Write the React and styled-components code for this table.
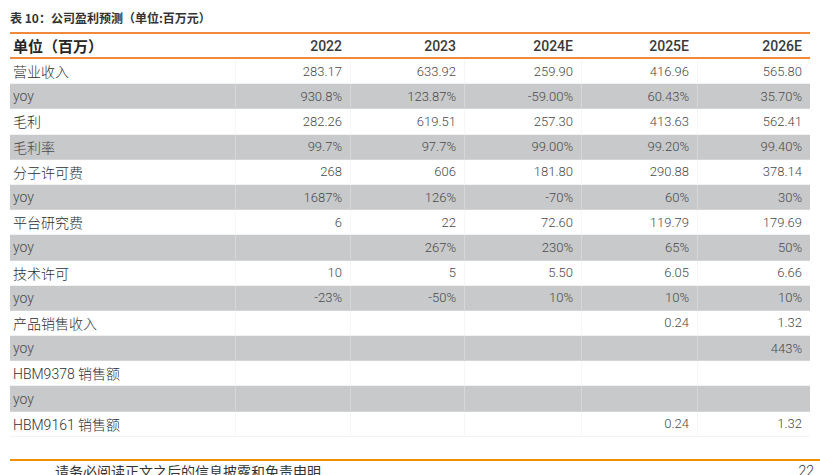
import React from "react";
import styled, { createGlobalStyle } from "styled-components";

const GlobalStyle = createGlobalStyle`
  html, body {
    margin: 0;
    padding: 0;
    background: #ffffff;
    overflow: hidden;
  }
  body {
    font-family: Roboto, "Noto Sans CJK SC", sans-serif;
  }
`;

const COLS = "225px 115px 114px 117px 116px 113px";

const rows = [
  { label: "营业收入", values: ["283.17", "633.92", "259.90", "416.96", "565.80"] },
  { label: "yoy", values: ["930.8%", "123.87%", "-59.00%", "60.43%", "35.70%"] },
  { label: "毛利", values: ["282.26", "619.51", "257.30", "413.63", "562.41"] },
  { label: "毛利率", values: ["99.7%", "97.7%", "99.00%", "99.20%", "99.40%"] },
  { label: "分子许可费", values: ["268", "606", "181.80", "290.88", "378.14"] },
  { label: "yoy", values: ["1687%", "126%", "-70%", "60%", "30%"] },
  { label: "平台研究费", values: ["6", "22", "72.60", "119.79", "179.69"] },
  { label: "yoy", values: ["", "267%", "230%", "65%", "50%"] },
  { label: "技术许可", values: ["10", "5", "5.50", "6.05", "6.66"] },
  { label: "yoy", values: ["-23%", "-50%", "10%", "10%", "10%"] },
  { label: "产品销售收入", values: ["", "", "", "0.24", "1.32"] },
  { label: "yoy", values: ["", "", "", "", "443%"] },
  { label: "HBM9378 销售额", values: ["", "", "", "", ""] },
  { label: "yoy", values: ["", "", "", "", ""] },
  { label: "HBM9161 销售额", values: ["", "", "", "0.24", "1.32"] },
];

const years = ["2022", "2023", "2024E", "2025E", "2026E"];

const Page = styled.div`
  width: 820px;
  height: 475px;
  padding-left: 10px;
  box-sizing: border-box;
  display: flex;
  flex-direction: column;
`;

const Title = styled.div`
  height: 32px;
  display: flex;
  align-items: center;
  padding-top: 3px;
  box-sizing: border-box;
  font-family: "Noto Sans CJK SC", sans-serif;
  font-weight: 700;
  font-size: 12px;
  color: #333333;
`;

const Table = styled.div`
  width: 800px;
  display: flex;
  flex-direction: column;
`;

const HeaderRow = styled.div`
  display: grid;
  grid-template-columns: ${COLS};
  height: 23px;
  border-top: 2px solid #f0893a;
  border-bottom: 2px solid #f0893a;
  align-items: center;
  color: #262626;
`;

const HeadLabel = styled.div`
  padding-left: 3px;
  font-family: "Noto Sans CJK SC", sans-serif;
  font-weight: 700;
  font-size: 15px;
`;

const HeadYear = styled.div`
  text-align: right;
  padding-right: 8px;
  font-family: Roboto, sans-serif;
  font-weight: 500;
  font-size: 14px;
  color: #3a3a3a;
`;

const Row = styled.div`
  display: grid;
  grid-template-columns: ${COLS};
  height: 25.2px;
  align-items: stretch;
  background: ${(p) => (p.$shaded ? "#c8c9ca" : "#ffffff")};
  border-bottom: 1px solid ${(p) => (p.$shaded ? "#d4d5d6" : "#f2f2f2")};
  box-sizing: border-box;
`;

const Label = styled.div`
  display: flex;
  align-items: center;
  padding-left: 3px;
  font-family: Roboto, "Noto Sans CJK SC", sans-serif;
  font-weight: 300;
  font-size: 14px;
  color: ${(p) => (p.$shaded ? "#4a4a4a" : "#2f2f2f")};
`;

const Value = styled.div`
  display: flex;
  align-items: center;
  justify-content: flex-end;
  padding-right: 8px;
  border-left: 1px solid ${(p) => (p.$shaded ? "#d6d7d8" : "#f6f6f6")};
  font-family: Roboto, sans-serif;
  font-weight: 300;
  font-size: 13px;
  color: #4a4a4a;
`;

const Spacer = styled.div`
  flex: 1;
`;

const Footer = styled.div`
  border-top: 2px solid #f29100;
  height: 16px;
  margin-bottom: -2px;
  display: flex;
  align-items: flex-start;
  justify-content: space-between;
  font-family: "Noto Sans CJK SC", sans-serif;
  font-size: 14px;
  color: #333333;
`;

const FooterText = styled.span`
  margin-left: 45px;
  margin-top: 1px;
  line-height: 18px;
`;

const PageNum = styled.span`
  margin-right: 6px;
  margin-top: 1px;
  line-height: 18px;
  font-family: Roboto, sans-serif;
  font-weight: 300;
  font-size: 14px;
`;

export default function App() {
  return (
    <>
      <GlobalStyle />
      <Page>
        <Title>表 10：公司盈利预测（单位:百万元）</Title>
        <Table>
          <HeaderRow>
            <HeadLabel>单位（百万）</HeadLabel>
            {years.map((y) => (
              <HeadYear key={y}>{y}</HeadYear>
            ))}
          </HeaderRow>
          {rows.map((r, i) => {
            const shaded = i % 2 === 1;
            return (
              <Row key={i} $shaded={shaded}>
                <Label $shaded={shaded}>{r.label}</Label>
                {r.values.map((v, j) => (
                  <Value key={j} $shaded={shaded}>
                    {v}
                  </Value>
                ))}
              </Row>
            );
          })}
        </Table>
        <Spacer />
        <Footer>
          <FooterText>请务必阅读正文之后的信息披露和免责申明</FooterText>
          <PageNum>22</PageNum>
        </Footer>
      </Page>
    </>
  );
}
